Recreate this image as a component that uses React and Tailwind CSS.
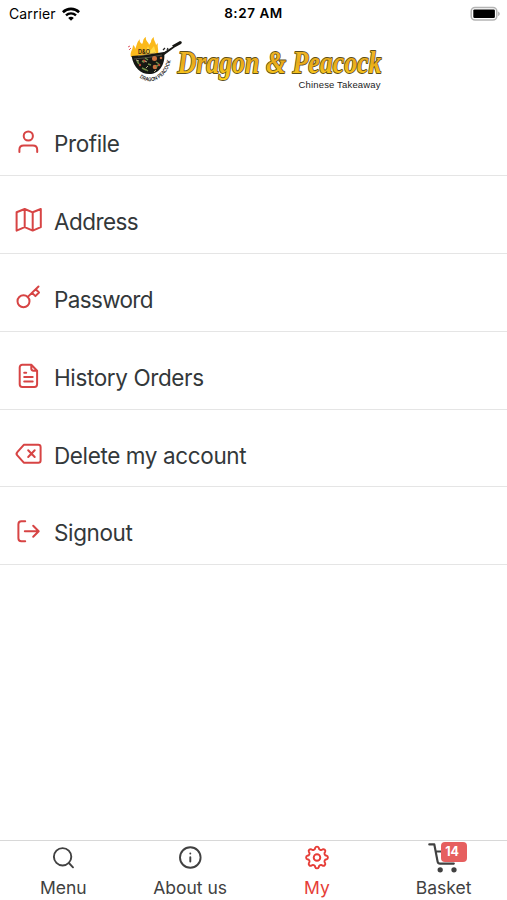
import React from "react";

const menuItems = [
  {
    label: "Profile",
    tracking: "tracking-[-0.4px]",
    icon: (
      <>
        <circle cx="16.3" cy="10" r="4.6" />
        <path d="M7.4 26v-2.2c0-2.6 1.7-4.2 4.3-4.2h9.2c2.6 0 4.3 1.6 4.3 4.2V26" />
      </>
    ),
  },
  {
    label: "Address",
    tracking: "tracking-[-0.55px]",
    icon: (
      <path d="M4.6 8.3 12.7 5l8 3.3L28.8 5v18.2l-8.1 3.4-8-3.4-8.1 3.4ZM12.7 5v18.2M20.7 8.3v18.3" />
    ),
  },
  {
    label: "Password",
    tracking: "tracking-[-0.65px]",
    icon: (
      <>
        <circle cx="11.5" cy="19.2" r="6" />
        <path d="M15.8 14.9 26.5 4.5M23.7 7.3l3.3 3.2-3.6 3.6-3.3-3.2" />
      </>
    ),
  },
  {
    label: "History Orders",
    tracking: "tracking-[-0.38px]",
    icon: (
      <path d="M19.3 4.8h-9a2.6 2.6 0 0 0-2.6 2.6v16.9a2.6 2.6 0 0 0 2.6 2.6h12.2a2.6 2.6 0 0 0 2.6-2.6V10.7ZM19.3 4.8v3.8a2.1 2.1 0 0 0 2.1 2.1h3.7M12.2 12.8h2M12.2 17.1h8.5M12.2 21.4h8.5" />
    ),
  },
  {
    label: "Delete my account",
    tracking: "tracking-[-0.38px]",
    icon: (
      <path d="M11.8 6.8h14.5A2.3 2.3 0 0 1 28.6 9v13.4a2.3 2.3 0 0 1-2.3 2.3H11.8L5.3 17.4a2.3 2.3 0 0 1 0-3.2ZM16.2 12.3l6.5 6.7M22.7 12.3 16.2 19" />
    ),
  },
  {
    label: "Signout",
    tracking: "tracking-[-0.38px]",
    icon: (
      <path d="M13.2 6.2H9.4a3 3 0 0 0-3 3v14.1a3 3 0 0 0 3 3h3.8M12.8 16.2h13.7M21.2 10.7l5.5 5.5-5.5 5.5" />
    ),
  },
];

const StatusBar = () => (
  <div className="flex h-[27px] shrink-0 items-center justify-between pl-[9px] pr-[7px] text-black">
    <div className="flex w-[88px] items-center gap-[6px]">
      <span className="text-[14px] tracking-[0.1px]">Carrier</span>
      <svg width="18" height="14" viewBox="0 0 18 14" fill="none" stroke="#000">
        <path d="M.9 5.2C5.4.8 12.6.8 17.1 5.2" strokeWidth="2.6" />
        <path d="M4 8.3c2.8-2.6 7.2-2.6 10 0" strokeWidth="2.4" />
        <path d="m9 13.7-2.8-2.8c1.5-1.4 4.1-1.4 5.6 0Z" fill="#000" stroke="none" />
      </svg>
    </div>
    <span className="text-[13.5px] font-semibold tracking-[0.55px]">8:27 AM</span>
    <div className="flex w-[90px] justify-end">
      <svg width="30" height="16" viewBox="0 0 30 16">
        <rect x="1.2" y="1.4" width="25.6" height="12.6" rx="3.8" fill="#fff" stroke="#b4b4b4" strokeWidth="1.5" />
        <rect x="3.3" y="3.4" width="21.6" height="8.6" rx="1.2" fill="#000" />
        <path d="M28.2 5.4c2 .9 2 3.8 0 4.7Z" fill="#aaa" />
      </svg>
    </div>
  </div>
);

const Logo = () => (
  <svg width="276" height="64" viewBox="116 30 276 64" className="mx-auto overflow-visible">
    <defs>
      <linearGradient id="gold" x1="0" y1="0" x2="0" y2="1">
        <stop offset="0" stopColor="#f4bc2a" />
        <stop offset=".5" stopColor="#e8aa1a" />
        <stop offset="1" stopColor="#ffd21c" />
      </linearGradient>
      <path id="panCurve" d="M139.5 77.5Q149 84.5 159 78.5 168.5 73 171.3 58" />
    </defs>
    <path
      d="M131 57c-1.500-5 2-7 2-12 2 1 2 3 2 4 2-3 1-6 5-10-1 3 1 4 2 5 2-2 0-5 4-7-1 4 3 5 3 8l2-3c0-2 1-4 3-5-1 3 2 5 2 8l2-2c-1 4 1 6 0 13Z"
      fill="#fbb91b"
    />
    <path d="m145 53 3-7 2 5 4-5 2 7Z" fill="#ffda48" />
    <path d="M131.500 56q17-1 32.500-4c2 11-4 21-13 22-9 1-17-5-19.500-18Z" fill="#151713" />
    <path d="m161 54 12-7.500-1-1 8-4.500q3 .5 1 3l-6.500 3.500-11 8Z" fill="#171713" />
    <path d="m138 56 17-3M134 59q14-1 28-4" stroke="#777466" strokeWidth=".6" fill="none" />
    <g fill="#cb703f">
      <circle cx="154.500" cy="58.500" r="2.500" />
      <circle cx="155" cy="67" r="2.300" />
      <circle cx="161" cy="58" r="1.300" />
    </g>
    <g fill="#be4a36">
      <circle cx="144" cy="61" r="1.600" />
      <circle cx="140" cy="65" r="1.200" />
      <circle cx="159" cy="65" r="1.300" />
    </g>
    <path
      d="m137 61 2 3m3 4 4 2m-1-12 3 2m0 4 3 1m5-3 3 2m-14 5 3 2m-4-9-2-1m14 6 2-2"
      stroke="#708b47"
      strokeWidth="1.500"
    />
    <path d="m136 60 3 1m7 7 2-2m8 4-2 2m-9-11 2 1" stroke="#e5d8aa" strokeWidth=".8" />
    <path d="m128 47 2-1m-1 4 2-2" stroke="#df5a66" strokeWidth="1" />
    <path d="m163 50 2-2m2 2 1-2m-3 5 2-1" stroke="#222" strokeWidth="1.200" />
    <text
      x="138"
      y="53.500"
      fontSize="5.500"
      fontWeight="700"
      fill="#3e2b11"
      className="font-['Inter',sans-serif]"
    >
      D&amp;O
    </text>
    <text fontSize="5.200" fontWeight="600" fill="#1d1d1d" className="font-['Inter',sans-serif]">
      <textPath href="#panCurve" textLength="43" lengthAdjust="spacingAndGlyphs">
        DRAGON PEACOCK
      </textPath>
    </text>
    <text
      x="177.500"
      y="73"
      textLength="204"
      lengthAdjust="spacingAndGlyphs"
      fontSize="31.500"
      fontWeight="700"
      fontStyle="italic"
      fill="url(#gold)"
      stroke="#5d4f1a"
      strokeWidth="1.800"
      paintOrder="stroke"
      strokeLinejoin="round"
      className="font-['Liberation_Serif',serif]"
    >
      Dragon &amp; Peacock
    </text>
    <text
      x="298.500"
      y="87.500"
      textLength="82"
      fontSize="9.500"
      fill="#222"
      className="font-['Liberation_Sans',sans-serif]"
    >
      Chinese Takeaway
    </text>
  </svg>
);

const MenuRow = ({ label, tracking, icon }) => (
  <li className="flex h-[77.9px] items-start border-b border-[#e5e5e5] pl-3 pt-7">
    <svg
      width="32"
      height="32"
      viewBox="0 0 32 32"
      fill="none"
      stroke="#d74444"
      strokeWidth="2"
      strokeLinecap="round"
      strokeLinejoin="round"
    >
      {icon}
    </svg>
    <span className={`ml-[10px] mt-[2px] text-[22.5px] leading-8 text-[#33383a] ${tracking}`}>
      {label}
    </span>
  </li>
);

const tabs = [
  {
    label: "Menu",
    icon: (
      <>
        <circle cx="15.6" cy="14.8" r="8.7" />
        <path d="m21.9 21 4.1 4.3" />
      </>
    ),
  },
  {
    label: "About us",
    icon: (
      <>
        <circle cx="16.3" cy="15.5" r="10.3" />
        <path d="M16.3 15.3v4.2M16.3 11.4v.2" />
      </>
    ),
  },
  {
    label: "My",
    active: true,
    icon: (
      <>
        <circle cx="16" cy="15.5" r="3.3" />
        <path d="M14.2 5.9A1.9 1.9 0 0 1 17.8 5.9A2.2 2.2 0 0 0 21.55 7.4A1.9 1.9 0 0 1 24.1 9.95A2.2 2.2 0 0 0 25.6 13.7A1.9 1.9 0 0 1 25.6 17.3A2.2 2.2 0 0 0 24.1 21.05A1.9 1.9 0 0 1 21.55 23.6A2.2 2.2 0 0 0 17.8 25.1A1.9 1.9 0 0 1 14.2 25.1A2.2 2.2 0 0 0 10.45 23.6A1.9 1.9 0 0 1 7.9 21.05A2.2 2.2 0 0 0 6.4 17.3A1.9 1.9 0 0 1 6.4 13.7A2.2 2.2 0 0 0 7.9 9.95A1.9 1.9 0 0 1 10.45 7.4A2.2 2.2 0 0 0 14.2 5.9Z" />
      </>
    ),
  },
  {
    label: "Basket",
    badge: 14,
    icon: (
      <>
        <path d="M1.3 2.4h5l3.3 17.2q.4 2 2.4 2h13.8M7.7 9.5h19l-2 9" strokeWidth="2.2" />
        <circle cx="12.2" cy="27.8" r="1.7" fill="currentColor" />
        <circle cx="26" cy="27.8" r="1.7" fill="currentColor" />
      </>
    ),
  },
];

const TabBar = () => (
  <nav className="grid h-[60px] shrink-0 grid-cols-4 border-t border-[#d8d8d8] bg-white">
    {tabs.map((tab) => (
      <div
        key={tab.label}
        className={`flex flex-col items-center pt-px ${
          tab.active ? "text-[#e63d37]" : "text-[#414141]"
        }`}
      >
        <div className="relative h-8 w-8">
          <svg
            width="32"
            height="32"
            viewBox="0 0 32 32"
            fill="none"
            stroke="currentColor"
            strokeWidth="1.9"
            strokeLinecap="round"
            strokeLinejoin="round"
          >
            {tab.icon}
          </svg>
          {tab.badge && (
            <span className="absolute left-[13px] top-0 flex h-5 w-[26px] items-center justify-center rounded-[4px] bg-[#e65f5f] pr-[3px] text-[12.5px] font-bold text-white">
              {tab.badge}
            </span>
          )}
        </div>
        <span className="text-[17.5px] leading-[27px]">{tab.label}</span>
      </div>
    ))}
  </nav>
);

const App = () => {
  return (
    <div className="flex h-screen w-full flex-col overflow-hidden bg-white font-['Inter',sans-serif]">
      <StatusBar />
      <header className="flex h-[71px] shrink-0 pt-[3px]">
        <Logo />
      </header>
      <ul className="flex-1">
        {menuItems.map((item) => (
          <MenuRow key={item.label} {...item} />
        ))}
      </ul>
      <TabBar />
    </div>
  );
};

export default App;
